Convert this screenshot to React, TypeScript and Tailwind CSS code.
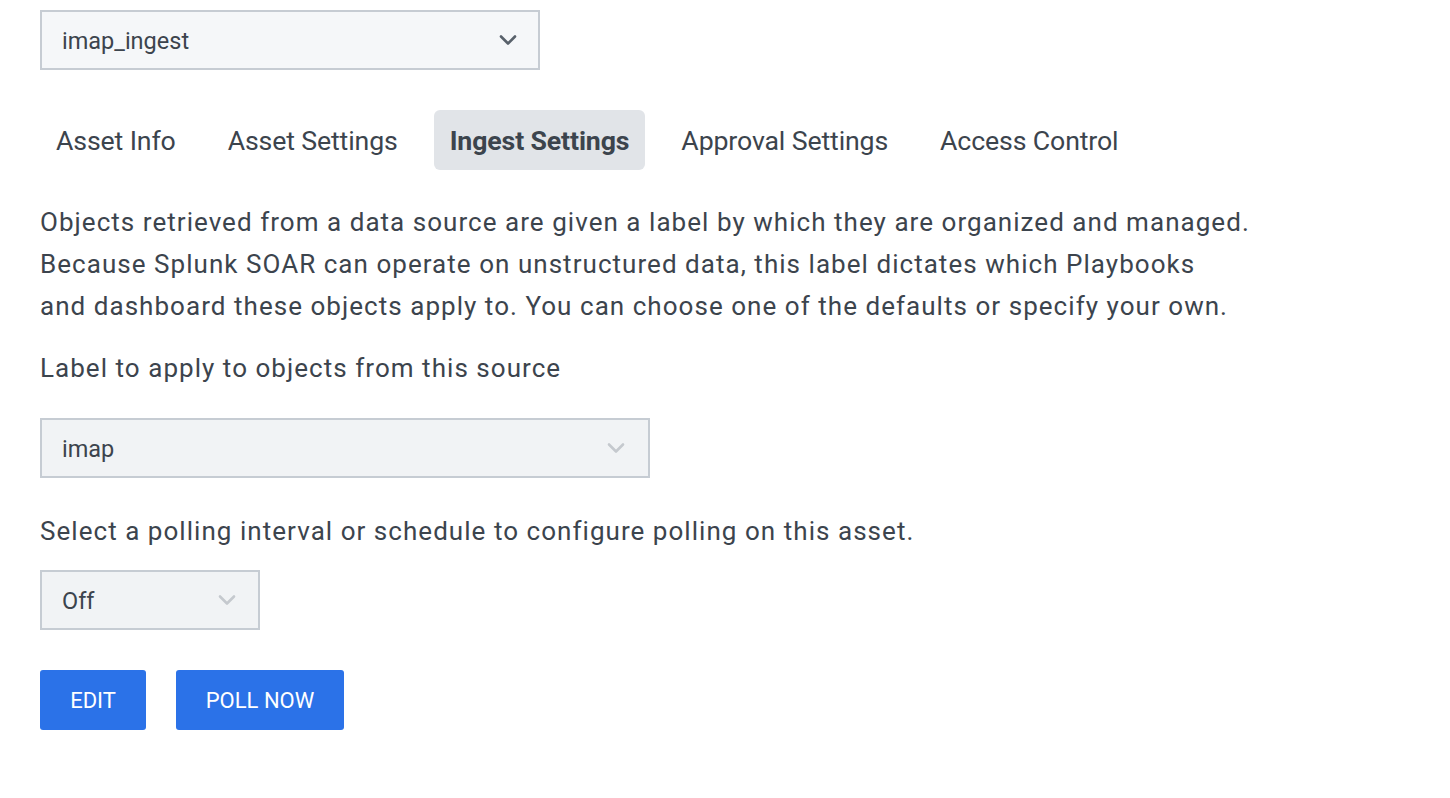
import React, { useState } from 'react';

const tabs = ['Asset Info', 'Asset Settings', 'Ingest Settings', 'Approval Settings', 'Access Control'];

const Chevron = ({ color }: { color: string }) => (
  <svg width="18" height="12" viewBox="0 0 18 12" fill="none">
    <path d="M2 2.5l7 7 7-7" stroke={color} strokeWidth="2.6" strokeLinecap="round" strokeLinejoin="round" />
  </svg>
);

interface SelectBoxProps {
  value: string;
  width: string;
  bg: string;
  chevron: string;
  chevronRight: string;
}

const SelectBox: React.FC<SelectBoxProps> = ({ value, width, bg, chevron, chevronRight }) => (
  <div className={`${width} ${bg} h-[60px] border-2 border-[#c6ccd3] flex items-center justify-between pl-[20px] ${chevronRight}`}>
    <span className="text-[23.5px] text-[#3c444d] pt-[4px]">{value}</span>
    <Chevron color={chevron} />
  </div>
);

export default function App() {
  const [active, setActive] = useState('Ingest Settings');

  return (
    <div className="min-h-screen bg-white pl-[40px] pt-[10px] font-['Roboto',sans-serif] text-[#3c444d]">
      <SelectBox value="imap_ingest" width="w-[500px]" bg="bg-[#f5f7f9]" chevron="#58616b" chevronRight="pr-[21px]" />

      <div className="flex gap-[20px] mt-[40px]">
        {tabs.map((t) => (
          <button
            key={t}
            onClick={() => setActive(t)}
            className={`h-[60px] px-[16px] pt-[2px] rounded-[6px] text-[26.7px] tracking-[-0.005em] ${
              active === t ? 'bg-[#e1e4e8] font-bold' : ''
            }`}
          >
            {t}
          </button>
        ))}
      </div>

      <p className="mt-[31px] w-[1320px] text-[26px] leading-[42px] tracking-[0.04em]">
        Objects retrieved from a data source are given a label by which they are organized and managed.
        <br />
        Because Splunk SOAR can operate on unstructured data, this label dictates which Playbooks
        <br />
        and dashboard these objects apply to. You can choose one of the defaults or specify your own.
      </p>

      <div className="mt-[20px] text-[26px] leading-[42px] tracking-[0.04em]">Label to apply to objects from this source</div>

      <div className="mt-[29px]">
        <SelectBox value="imap" width="w-[610px]" bg="bg-[#f1f3f5]" chevron="#c5c9ce" chevronRight="pr-[23px]" />
      </div>

      <div className="mt-[32px] text-[26px] leading-[42px] tracking-[0.04em]">
        Select a polling interval or schedule to configure polling on this asset.
      </div>

      <div className="mt-[18px]">
        <SelectBox value="Off" width="w-[220px]" bg="bg-[#f1f3f5]" chevron="#c5c9ce" chevronRight="pr-[22px]" />
      </div>

      <div className="flex gap-[30px] mt-[40px]">
        <button className="h-[60px] w-[106px] rounded-[3px] bg-[#2b72e8] text-white text-[22px] pt-[1px]">EDIT</button>
        <button className="h-[60px] w-[168px] rounded-[3px] bg-[#2b72e8] text-white text-[22px] pt-[1px]">POLL NOW</button>
      </div>
    </div>
  );
}
